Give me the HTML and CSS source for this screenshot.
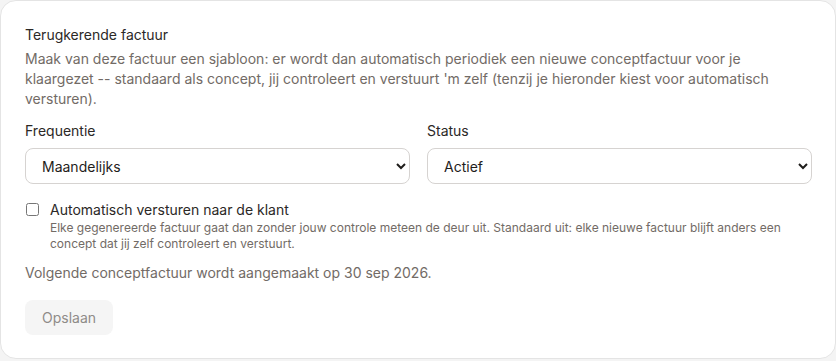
FILE: index.html
```html
<!DOCTYPE html>
<html lang="nl">
<head>
    <meta charset="UTF-8">
    <meta name="viewport" content="width=device-width, initial-scale=1.0">
    <title>Terugkerende factuur</title>
    <link rel="stylesheet" href="styles.css">
</head>
<body>
    <div class="card">
        <h3 class="card-title">Terugkerende factuur</h3>
        <p class="card-desc">Maak van deze factuur een sjabloon: er wordt dan automatisch periodiek een nieuwe conceptfactuur voor je klaargezet -- standaard als concept, jij controleert en verstuurt 'm zelf (tenzij je hieronder kiest voor automatisch versturen).</p>

        <div class="field-row">
            <label class="field">
                <span class="field-label">Frequentie</span>
                <select>
                    <option>Maandelijks</option>
                    <option>Per kwartaal</option>
                    <option>Jaarlijks</option>
                </select>
            </label>
            <label class="field">
                <span class="field-label">Status</span>
                <select>
                    <option>Actief</option>
                    <option>Gepauzeerd</option>
                </select>
            </label>
        </div>

        <label class="check-row">
            <input type="checkbox">
            <span class="check-text">
                <span class="check-title">Automatisch versturen naar de klant</span>
                <span class="check-hint">Elke gegenereerde factuur gaat dan zonder jouw controle meteen de deur uit. Standaard uit: elke nieuwe factuur blijft anders een concept dat jij zelf controleert en verstuurt.</span>
            </span>
        </label>

        <p class="next-date">Volgende conceptfactuur wordt aangemaakt op 30 sep 2026.</p>

        <button class="save-btn" disabled>Opslaan</button>
    </div>
</body>
</html>
```

FILE: styles.css
```css
/* General Styles */
body {
    margin: 0;
    background-color: #f4f4f4;
    font-family: Inter, 'Noto Sans', sans-serif;
    font-size: 14px;
    line-height: 20px;
    color: #2b2826;
}

.card {
    height: 359px;
    box-sizing: border-box;
    background-color: #fff;
    border: 1px solid #e4e4e4;
    border-radius: 16px;
    padding: 24px 23px 23px 24px;
}

.card-title {
    margin: 0;
    font-size: 14px;
    font-weight: 400;
    line-height: 20px;
    color: #2b2826;
}

.card-desc {
    margin: 4px 0 0;
    color: #726b66;
}

/* Fields */
.field-row {
    display: grid;
    grid-template-columns: 1fr 1fr;
    gap: 17px;
    margin-top: 12px;
}

.field {
    display: flex;
    flex-direction: column;
    gap: 7px;
}

.field-label {
    color: #2b2826;
}

.field select {
    height: 36px;
    padding: 0 12px;
    font-family: inherit;
    font-size: 14px;
    color: #1f1d1b;
    background-color: #fff;
    border: 1px solid #d6d3d1;
    border-radius: 8px;
}

/* Checkbox */
.check-row {
    display: flex;
    align-items: flex-start;
    gap: 11px;
    margin-top: 16px;
}

.check-row input {
    width: 13px;
    height: 13px;
    margin: 3px 0 0 1px;
}

.check-text {
    display: flex;
    flex-direction: column;
}

.check-title {
    color: #2b2826;
}

.check-hint {
    font-size: 12px;
    line-height: 16px;
    color: #726b66;
}

.next-date {
    margin: 11px 0 0;
    color: #726b66;
}

.save-btn {
    margin-top: 17px;
    height: 35px;
    padding: 0 17px;
    font-family: inherit;
    font-size: 14px;
    color: #8f8b88;
    background-color: #f5f5f5;
    border: none;
    border-radius: 8px;
}
```
